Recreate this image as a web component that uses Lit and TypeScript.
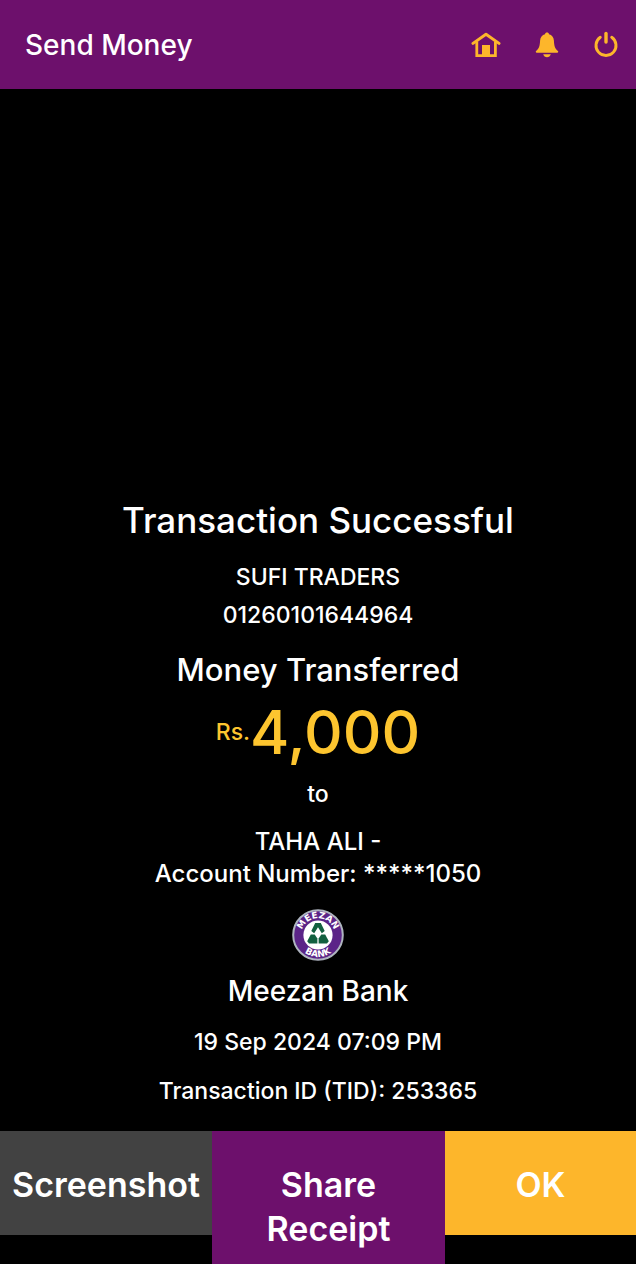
import { LitElement, html, css, svg } from "lit";
import { customElement } from "lit/decorators.js";

const homeIcon = svg`
  <svg viewBox="0 0 30 26" width="30" height="26" aria-hidden="true">
    <path d="M2 11.4 15 2.2 28 11.4" fill="none" stroke="currentColor" stroke-width="3" stroke-linecap="round" stroke-linejoin="round"/>
    <path d="M5.800 9.500V23.700H24.400V9.500" fill="none" stroke="currentColor" stroke-width="2.8"/>
    <path d="M11 13H19V24H11Z" fill="currentColor"/>
  </svg>`;

const bellIcon = svg`
  <svg viewBox="0 0 24 26" width="24" height="26" aria-hidden="true">
    <path d="M12 .6c1.100 0 1.900.7 2 1.700 2.900.8 4.700 3.100 4.900 6.200.3 5.400.9 7.800 4 10.600.7.7.3 1.700-.6 1.700H1.700c-.9 0-1.300-1-.6-1.700 3.100-2.800 3.700-5.200 4-10.600.2-3.100 2-5.400 4.900-6.200.1-1 .9-1.700 2-1.700Z" fill="currentColor"/>
    <path d="M8.200 22.300H15.800C15.200 24.300 13.800 25.200 12 25.200S8.800 24.300 8.200 22.300Z" fill="currentColor"/>
  </svg>`;

const powerIcon = svg`
  <svg viewBox="0 0 26 28" width="26" height="28" aria-hidden="true">
    <path d="M7.300 6.300A10 10 0 1 0 18.700 6.300" fill="none" stroke="currentColor" stroke-width="2.900" stroke-linecap="round"/>
    <path d="M13 2.500V11" fill="none" stroke="currentColor" stroke-width="3.400" stroke-linecap="round"/>
  </svg>`;

const bankLogo = svg`
  <svg class="logo" viewBox="0 0 52 52" width="52" height="52" role="img" aria-label="Meezan Bank">
    <defs>
      <path id="upper" d="M11.500 34.300A16.700 16.700 0 1 1 40.500 34.300"/>
      <path id="lower" d="M5.400 34A22.200 22.200 0 0 0 46.600 34"/>
    </defs>
    <circle cx="26" cy="26" r="24.800" fill="#5b2488" stroke="#aeb4bf" stroke-width="2"/>
    <circle cx="26" cy="26" r="14.600" fill="#fff"/>
    <g fill="#12603f">
      <path d="M23.200 14H28.800L32.700 22 29.800 24.300 26 18.300 22.200 24.300 19.300 22Z"/>
      <path d="M18.800 25.500H22.700L25.400 29.500V34.500H17L15.200 32.300Z"/>
      <path d="M33.200 25.500H29.300L26.600 29.500V34.500H35L36.800 32.300Z"/>
    </g>
    <g class="logo-text" text-anchor="middle">
      <text><textPath href="#upper" startOffset="50%">MEEZAN</textPath></text>
      <text><textPath href="#lower" startOffset="50%">BANK</textPath></text>
    </g>
  </svg>`;

@customElement("app-root")
export class AppRoot extends LitElement {
  static styles = css`
    :host {
      display: flex;
      flex-direction: column;
      min-height: 100vh;
      background: #000;
      color: #fff;
      font-family: Inter, "Noto Sans", sans-serif;
      font-size: 23px;
      font-weight: 500;
      line-height: 32px;
    }
    * { box-sizing: border-box; }
    h1, h2, p { margin: 0; font-weight: 500; }
    button {
      border: 0;
      font: inherit;
      color: inherit;
      cursor: pointer;
    }
    .bar {
      display: flex;
      align-items: center;
      justify-content: space-between;
      padding: 27px 17px 26px 25px;
      background: #6d106c;
    }
    .title { font-size: 28px; line-height: 36px; }
    .actions { display: flex; align-items: center; gap: 34px; color: #fdb62b; }
    .action { display: flex; padding: 0; background: none; }
    .receipt {
      flex: 1;
      display: flex;
      flex-direction: column;
      align-items: center;
      justify-content: flex-end;
      padding: 24px 16px;
      text-align: center;
    }
    .status { font-size: 35px; line-height: 48px; margin-bottom: 17px; }
    .sender { display: grid; gap: 6px; margin-bottom: 19px; }
    .label { font-size: 31px; line-height: 40px; margin-bottom: 6px; }
    .amount {
      display: flex;
      align-items: center;
      color: #fdc52f;
      margin-bottom: 10px;
    }
    .value { font-size: 60px; line-height: 72px; }
    .to { margin-bottom: 16px; }
    .payee { font-size: 24px; margin-bottom: 19px; }
    .logo { display: block; margin-bottom: 12px; }
    .logo-text {
      fill: #fff;
      font-family: "DejaVu Sans", sans-serif;
      font-size: 9px;
      font-weight: 700;
    }
    .bank { font-size: 28px; line-height: 36px; margin-bottom: 17px; }
    .details { display: grid; gap: 17px; }
    .footer {
      display: grid;
      grid-template-columns: 212fr 233fr 191fr;
      align-items: start;
      font-size: 34px;
      line-height: 44px;
      font-weight: 600;
    }
    .button { padding: 32px 8px 28px; }
    .grey { background: #424242; }
    .purple { background: #6d106c; padding: 32px 48px 13px; }
    .yellow { background: #fdb62b; }
  `;

  render() {
    return html`
      <header class="bar">
        <h1 class="title">Send Money</h1>
        <nav class="actions">
          <button class="action" aria-label="Home">${homeIcon}</button>
          <button class="action" aria-label="Notifications">${bellIcon}</button>
          <button class="action" aria-label="Log out">${powerIcon}</button>
        </nav>
      </header>
      <main class="receipt">
        <h2 class="status">Transaction Successful</h2>
        <div class="sender">
          <p>SUFI TRADERS</p>
          <p>01260101644964</p>
        </div>
        <p class="label">Money Transferred</p>
        <p class="amount"><span>Rs.</span><span class="value">4,000</span></p>
        <p class="to">to</p>
        <div class="payee">
          <p>TAHA ALI -</p>
          <p>Account Number: *****1050</p>
        </div>
        ${bankLogo}
        <p class="bank">Meezan Bank</p>
        <div class="details">
          <p>19 Sep 2024 07:09 PM</p>
          <p>Transaction ID (TID): 253365</p>
        </div>
      </main>
      <footer class="footer">
        <button class="button grey">Screenshot</button>
        <button class="button purple">Share Receipt</button>
        <button class="button yellow">OK</button>
      </footer>
    `;
  }
}
